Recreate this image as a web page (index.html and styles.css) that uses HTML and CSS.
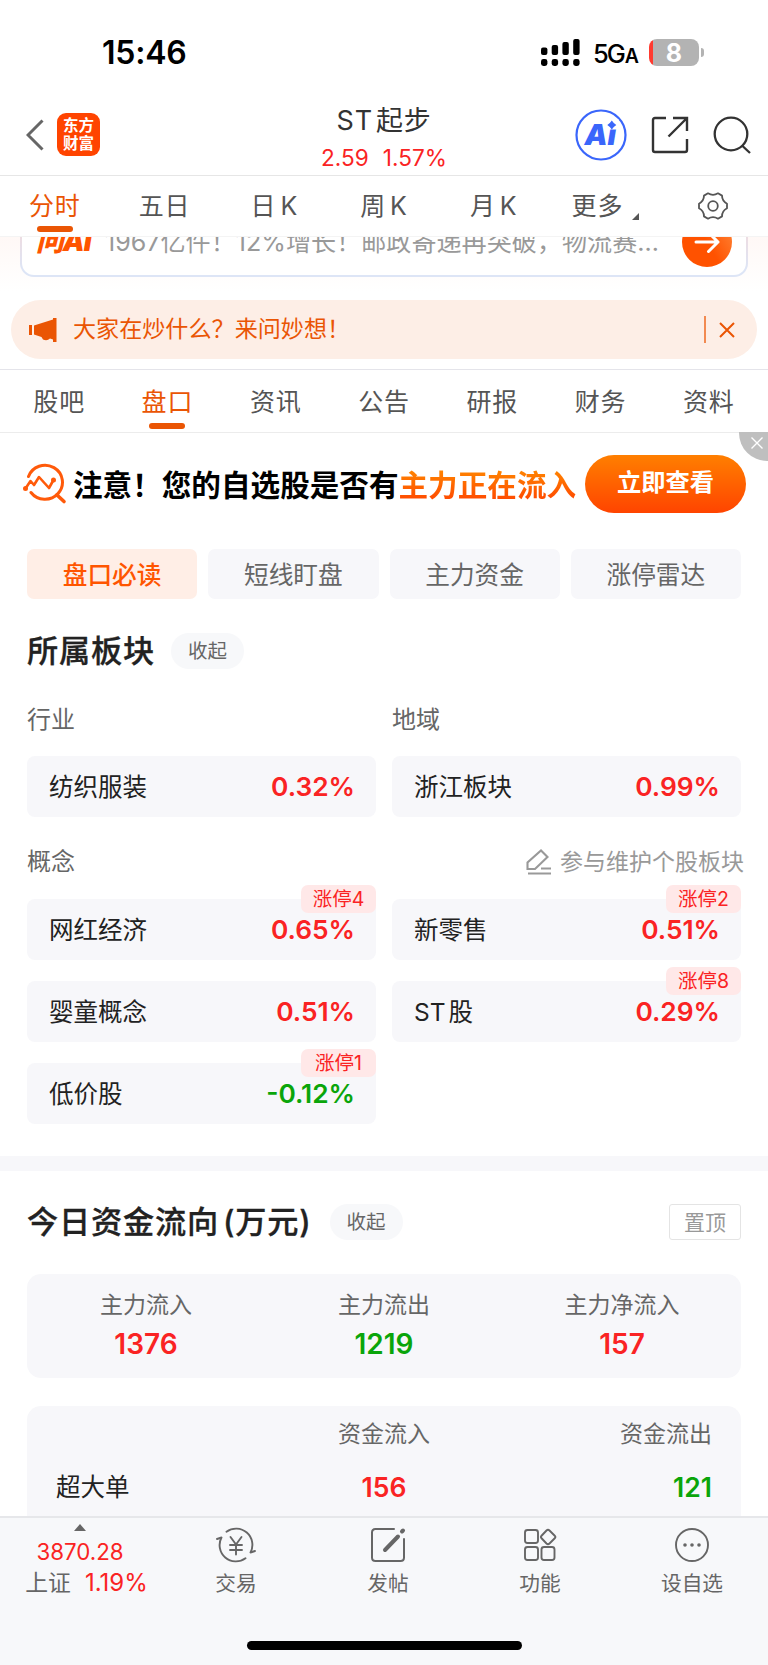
FILE: index.html
```html
<!DOCTYPE html>
<html lang="zh-CN">

<head>
    <meta charset="UTF-8">
    <meta name="viewport" content="width=device-width, initial-scale=1.0">
    <title>ST起步</title>
    <link rel="stylesheet" href="styles.css">
</head>

<body>
    <div class="status">
        <span class="time">15:46</span>
        <div class="status-right">
            <svg class="signal" width="39" height="27" viewBox="0 0 39 27">
                <rect x="0" y="8.5" width="6.4" height="7.5" rx="2" />
                <rect x="10.7" y="6" width="6.4" height="10" rx="2" />
                <rect x="21.4" y="3" width="6.4" height="13" rx="2" />
                <rect x="32.2" y="0" width="6.4" height="16" rx="2" />
                <rect x="0" y="20" width="6.4" height="7" rx="2.4" />
                <rect x="10.7" y="20" width="6.4" height="7" rx="2.4" />
                <rect x="21.4" y="20" width="6.4" height="7" rx="2.4" />
                <rect x="32.2" y="20" width="6.4" height="7" rx="2.4" />
            </svg>
            <span class="network">5G<small>A</small></span>
            <span class="battery">8</span>
            <span class="battery-cap"></span>
        </div>
    </div>

    <header class="header">
        <div class="header-left">
            <svg width="18" height="32" viewBox="0 0 18 32" fill="none" stroke="#666" stroke-width="3">
                <path d="M16.5 1.5L2 16L16.5 30.5" />
            </svg>
            <span class="logo">东方<br>财富</span>
        </div>
        <div class="stock">
            <div class="stock-name">ST<i></i>起步</div>
            <div class="stock-price"><span>2.59</span><span>1.57%</span></div>
        </div>
        <div class="header-right">
            <svg width="52" height="52" viewBox="0 0 52 52">
                <circle cx="26" cy="26" r="24.5" fill="#fff" stroke="#3a66fb" stroke-width="2.2" />
                <text class="ai-text" x="9.5" y="36">Ai</text>
                <rect x="31.5" y="10" width="12" height="10.5" fill="#fff" />
                <path d="M36.8 11.5L38.8 14L41.3 16L38.8 18L36.8 20.5L34.8 18L32.3 16L34.8 14Z" fill="#3a66fb" />
            </svg>
            <svg class="share" width="38" height="38" viewBox="0 0 38 38" fill="none" stroke="#333" stroke-width="2.4">
                <path d="M15 2H4Q2 2 2 4V34Q2 36 4 36H34Q36 36 36 34V23" />
                <path d="M22 2H36V15M36 2L17.5 20.5" />
            </svg>
            <svg width="38" height="38" viewBox="0 0 38 38" fill="none" stroke="#333" stroke-width="2.3">
                <circle cx="18" cy="18" r="16.3" />
                <path d="M29 29.5L37 37" />
            </svg>
        </div>
    </header>

    <nav class="period">
        <span class="active">分时</span>
        <span>五日</span>
        <span>日<i></i>K</span>
        <span>周<i></i>K</span>
        <span>月<i></i>K</span>
        <span class="more">更多<b class="corner"></b></span>
        <span>
            <svg width="30" height="28" viewBox="0 0 30 28" fill="none" stroke="#555" stroke-width="1.8" stroke-linejoin="round">
                <path d="M10 1.3Q15 4.5 20 1.3L24 3.6Q24 9 29 11.7V16.3Q24 19 24 24.4L20 26.7Q15 23.5 10 26.7L6 24.4Q6 19 1 16.3V11.7Q6 9 6 3.6Z" />
                <circle cx="15" cy="14" r="4.8" />
            </svg>
        </span>
    </nav>

    <div class="ask-wrap">
        <div class="ask">
            <span class="ask-logo">问AI</span>
            <span class="ask-text">1967亿件！12%增长！邮政寄递再突破，物流赛…</span>
            <span class="ask-go">
                <svg width="28" height="24" viewBox="0 0 28 24" fill="none" stroke="#fff" stroke-width="3" stroke-linecap="round" stroke-linejoin="round">
                    <path d="M3 12H25M15.5 2.5L25 12L15.5 21.5" />
                </svg>
            </span>
        </div>
    </div>

    <div class="notice">
        <svg width="28" height="24" viewBox="0 0 28 24" fill="#ea5504">
            <path d="M0 7H3V17H0ZM5 7.5L24 1.5V0H27.5V24H24V21.5L21 20.5Q18 23.5 14 21.5L12.5 19L5 16.5Z" />
        </svg>
        <span class="notice-text">大家在炒什么？来问妙想！</span>
        <i class="notice-line"></i>
        <svg width="16" height="16" viewBox="0 0 16 16" stroke="#ea5504" stroke-width="2">
            <path d="M1 1L15 15M15 1L1 15" />
        </svg>
    </div>

    <nav class="tabs">
        <span>股吧</span>
        <span class="active">盘口</span>
        <span>资讯</span>
        <span>公告</span>
        <span>研报</span>
        <span>财务</span>
        <span>资料</span>
    </nav>

    <div class="promo">
        <svg width="44" height="42" viewBox="0 0 44 42" fill="none" stroke="#ff5a0a" stroke-width="3" stroke-linecap="round" stroke-linejoin="round">
            <path d="M5.5 13.5A17.5 17 0 1 1 8 29.5" />
            <path d="M34 32L41 38.5" stroke-width="3.6" />
            <path d="M2.5 25.5L7.5 18L11 22L16 14L26 25L30.5 17" stroke-width="2.6" />
            <circle cx="2.5" cy="25.5" r="1" />
            <circle cx="30.5" cy="17" r="1" />
        </svg>
        <span class="promo-text">注意！您的自选股是否有<em>主力正在流入</em></span>
        <span class="promo-btn">立即查看</span>
        <span class="promo-close">
            <svg width="12" height="12" viewBox="0 0 12 12" stroke="#fff" stroke-width="1.4">
                <path d="M0.5 0.5L11.5 11.5M11.5 0.5L0.5 11.5" />
            </svg>
        </span>
    </div>

    <div class="pills">
        <span class="active">盘口必读</span>
        <span>短线盯盘</span>
        <span>主力资金</span>
        <span>涨停雷达</span>
    </div>

    <section class="sector">
        <div class="title">
            <h2>所属板块</h2>
            <span class="fold">收起</span>
        </div>
        <div class="grid labels">
            <span>行业</span>
            <span>地域</span>
        </div>
        <div class="grid">
            <div class="item">纺织服装<b>0.32%</b></div>
            <div class="item">浙江板块<b>0.99%</b></div>
        </div>
        <div class="concept">
            <span>概念</span>
            <span class="edit">
                <svg width="26" height="26" viewBox="0 0 26 26" fill="none" stroke="#999" stroke-width="2.1">
                    <path d="M1.5 20V13.5L15 1.5L21.5 8L9 20ZM15 19.5H25M2 24.5H25" />
                </svg>
                参与维护个股板块
            </span>
        </div>
        <div class="grid">
            <div class="item">网红经济<b>0.65%</b><small>涨停4</small></div>
            <div class="item">新零售<b>0.51%</b><small>涨停2</small></div>
            <div class="item">婴童概念<b>0.51%</b></div>
            <div class="item">ST<i></i>股<b>0.29%</b><small>涨停8</small></div>
            <div class="item">低价股<b class="down">-0.12%</b><small>涨停1</small></div>
        </div>
    </section>

    <section class="flow">
        <div class="title">
            <h2>今日资金流向<i></i>(万元)</h2>
            <span class="fold">收起</span>
            <span class="pin">置顶</span>
        </div>
        <div class="summary">
            <div>主力流入<b>1376</b></div>
            <div>主力流出<b class="down">1219</b></div>
            <div>主力净流入<b>157</b></div>
        </div>
        <div class="detail">
            <span></span>
            <span>资金流入</span>
            <span>资金流出</span>
            <span class="name">超大单</span>
            <b>156</b>
            <b class="down">121</b>
        </div>
    </section>

    <footer class="bottom">
        <div class="index">
            <i class="up"></i>
            <span class="red">3870.28</span>
            <span class="index-row">上证<em>1.19%</em></span>
        </div>
        <div class="nav-item">
            <svg width="40" height="36" viewBox="0 0 40 36" fill="none" stroke="#666" stroke-width="1.9" stroke-linecap="round" stroke-linejoin="round">
                <path d="M10.5 4.7A16.3 16.3 0 0 1 34.5 25.5L39 24" />
                <path d="M29.5 31.3A16.3 16.3 0 0 1 5.5 10.5L1 12" />
                <path d="M14.5 10L20 17.5L25.5 10M14 18H26M14 23H26M20 18V27.5" />
            </svg>
            <span>交易</span>
        </div>
        <div class="nav-item">
            <svg width="36" height="36" viewBox="0 0 36 36" fill="none" stroke="#666" stroke-width="2" stroke-linecap="round">
                <path d="M24 2H5.5Q2 2 2 5.5V30.5Q2 34 5.5 34H30.5Q34 34 34 30.5V12" />
                <path d="M28 9.5L15 23" stroke-width="4" />
                <path d="M32 4.5L33 3.5" stroke-width="4" />
            </svg>
            <span>发帖</span>
        </div>
        <div class="nav-item">
            <svg width="34" height="36" viewBox="0 0 34 36" fill="none" stroke="#666" stroke-width="1.9" stroke-linejoin="round">
                <rect x="2" y="3" width="13" height="13" rx="2.5" />
                <rect x="2" y="20" width="13" height="13" rx="2.5" />
                <rect x="18.5" y="20" width="13" height="13" rx="2.5" />
                <path d="M23.5 3.5Q25 2 26.5 3.5L32 9Q32.8 10 32 11L26.5 16.5Q25 18 23.5 16.5L18.3 11Q17.5 10 18.3 9Z" />
            </svg>
            <span>功能</span>
        </div>
        <div class="nav-item">
            <svg width="36" height="36" viewBox="0 0 36 36" fill="none" stroke="#666" stroke-width="1.9">
                <circle cx="18" cy="18" r="16" />
                <g fill="#666" stroke="none">
                    <circle cx="11" cy="18" r="1.8" />
                    <circle cx="18" cy="18" r="1.8" />
                    <circle cx="25" cy="18" r="1.8" />
                </g>
            </svg>
            <span>设自选</span>
        </div>
        <div class="home-bar"></div>
    </footer>
</body>

</html>
```
FILE: styles.css
```css
* {
    box-sizing: border-box;
}

body {
    margin: 0;
    width: 768px;
    height: 1665px;
    overflow: hidden;
    display: flex;
    flex-direction: column;
    background: #fff;
    color: #222;
    font-family: Inter, "Noto Sans CJK SC", sans-serif;
    font-size: 24px;
    line-height: 1;
    white-space: nowrap;
}

body > * {
    flex-shrink: 0;
}

svg {
    display: block;
    flex-shrink: 0;
}

i,
em {
    font-style: normal;
}

/* status bar */
.status {
    height: 90px;
    padding: 14px 64px 0 102px;
    display: flex;
    align-items: center;
    justify-content: space-between;
    color: #000;
}

.time {
    padding-top: 2px;
    font-size: 32px;
    font-weight: 600;
    letter-spacing: -0.2px;
}

.status-right {
    display: flex;
    align-items: center;
}

.network {
    width: 44px;
    margin: 3px 12px 0 13px;
    font-size: 25.5px;
    font-weight: 500;
    letter-spacing: -2px;
}

.network small {
    font-size: 19.5px;
    font-weight: 600;
    margin-left: 1px;
}

.battery {
    width: 50px;
    height: 27px;
    border-radius: 8px;
    background: linear-gradient(90deg, #ff3b30 4px, #b3b3b3 4px);
    color: #fff;
    font-size: 25px;
    font-weight: 700;
    line-height: 28px;
    text-align: center;
}

.battery-cap {
    width: 3px;
    height: 9px;
    margin-left: 2px;
    border-radius: 0 4px 4px 0;
    background: #b3b3b3;
}

/* header */
.header {
    height: 86px;
    padding: 0 17px 0 26px;
    display: grid;
    grid-template-columns: 1fr 200px 1fr;
    border-bottom: 1px solid #e6e6e6;
}

.header-left {
    display: flex;
    align-items: center;
    gap: 13px;
    padding-top: 4px;
}

.logo {
    width: 43px;
    height: 43px;
    padding-top: 4px;
    border-radius: 9px;
    background: #ff4400;
    color: #fff;
    font-size: 15.5px;
    font-weight: 700;
    line-height: 17.5px;
    text-align: center;
}

.stock {
    padding-top: 15px;
    text-align: center;
    margin-left: -9px;
}

.stock-name {
    font-size: 27px;
    line-height: 32px;
    letter-spacing: 0.8px;
    color: #333;
}

.stock-name i {
    margin-left: 3px;
}

.stock-price {
    display: flex;
    justify-content: center;
    gap: 14px;
    margin-top: 7px;
    font-size: 22.6px;
    line-height: 28px;
    color: #fa2323;
}

.header-right {
    display: flex;
    align-items: center;
    justify-content: flex-end;
    padding-top: 4px;
}

.ai-text {
    font-size: 29px;
    font-weight: 900;
    font-style: italic;
    fill: #3a66fb;
}

.share {
    margin: 0 24px;
}

/* chart period */
.period {
    position: relative;
    height: 61px;
    display: grid;
    grid-template-columns: repeat(7, 1fr);
    background: #fff;
    border-bottom: 1px solid #f4f4f4;
}

.period span,
.tabs span {
    position: relative;
    display: flex;
    align-items: center;
    justify-content: center;
    font-size: 25px;
    letter-spacing: 0.8px;
    color: #555;
}

.period .more {
    padding-left: 4px;
}

.period i {
    margin-left: 4px;
}

.period .active,
.tabs .active {
    color: #ea5504;
}

.active::after {
    position: absolute;
    left: calc(50% - 18px);
    bottom: 4px;
    width: 36px;
    height: 6px;
    border-radius: 3px;
    background: #ea5504;
}

.period .active::after,
.tabs .active::after {
    content: "";
}

.corner {
    margin: 20px 0 0 9px;
    border-left: 7px solid transparent;
    border-bottom: 7px solid #555;
}

/* ask bar, scrolled half under the period tabs */
.ask-wrap {
    height: 63px;
    padding: 0 20px;
    overflow: hidden;
    background: linear-gradient(#fff8f6, #fff 54px);
}

.ask {
    height: 71px;
    margin-top: -31px;
    padding: 0 14px;
    display: flex;
    align-items: center;
    border: 2px solid transparent;
    border-radius: 14px;
    background: linear-gradient(#fff, #fff) padding-box, linear-gradient(#fbd5d0, #dde5f6 90%) border-box;
}

.ask-logo {
    width: 69px;
    font-size: 27.5px;
    font-weight: 900;
    font-style: italic;
    letter-spacing: -0.8px;
    color: #ff5500;
}

.ask-text {
    flex: 1;
    padding-top: 2px;
    font-size: 25.1px;
    color: #999;
}

.ask-go {
    width: 50px;
    height: 50px;
    display: flex;
    align-items: center;
    justify-content: center;
    border-radius: 50%;
    background: linear-gradient(60deg, #ff5200 50%, #ff8a3c);
}

/* notice */
.notice {
    height: 59px;
    margin: 0 11px;
    padding: 0 22px 0 18px;
    display: flex;
    align-items: center;
    border-radius: 30px;
    background: #fdeee6;
}

.notice-text {
    flex: 1;
    margin: 1px 0 0 16px;
    font-size: 23.1px;
    color: #ea5504;
}

.notice-line {
    width: 2px;
    height: 27px;
    margin-right: 13px;
    background: #f28a51;
}

/* tabs */
.tabs {
    height: 64px;
    margin-top: 10px;
    padding: 0 5px;
    display: grid;
    grid-template-columns: repeat(7, 1fr);
    border-top: 1px solid #e4e4ea;
    border-bottom: 1px solid #ececec;
}

.tabs span {
    padding-top: 2px;
}

.tabs .active::after {
    bottom: 3px;
}

/* promo */
.promo {
    position: relative;
    height: 105px;
    padding: 0 22px 4px 23px;
    display: flex;
    align-items: center;
}

.promo-text {
    flex: 1;
    margin: 2px 0 0 6px;
    font-size: 29.6px;
    line-height: 36px;
    font-weight: 700;
    color: #000;
}

.promo-text em {
    background: linear-gradient(#ff8a00, #ff4400);
    -webkit-background-clip: text;
    background-clip: text;
    color: transparent;
}

.promo-btn {
    width: 161px;
    height: 58px;
    border-radius: 29px;
    background: linear-gradient(#ff7f00, #ff4400);
    color: #fff;
    font-size: 24.3px;
    font-weight: 700;
    line-height: 55px;
    text-align: center;
}

.promo-close {
    position: absolute;
    top: -1px;
    right: 0;
    width: 29px;
    height: 29px;
    padding: 5px 0 0 12px;
    border-radius: 0 0 0 28px;
    background: #bfbfbf;
}

/* pills */
.pills {
    display: grid;
    grid-template-columns: repeat(4, 1fr);
    gap: 11px;
    margin: 11px 27px 0;
}

.pills span {
    height: 50px;
    border-radius: 7px;
    background: #f7f7fa;
    color: #666;
    font-size: 24.7px;
    line-height: 52px;
    text-align: center;
}

.pills .active {
    background: #ffeee6;
    color: #ff5500;
    font-weight: 500;
}

/* sector */
.sector {
    height: 572px;
    padding: 34px 27px 0;
    border-bottom: 15px solid #f7f7fa;
}

.title {
    height: 36px;
    display: flex;
    align-items: center;
}

h2 {
    margin: 0;
    padding-top: 2px;
    font-size: 31.2px;
    font-weight: 500;
    letter-spacing: 0.8px;
    -webkit-text-stroke: 0.3px #222;
}

h2 i {
    margin-left: 4px;
}

.fold {
    width: 73px;
    height: 36px;
    margin-left: 16px;
    border-radius: 18px;
    background: #f7f8fa;
    color: #666;
    font-size: 19.5px;
    line-height: 37px;
    text-align: center;
}

.grid {
    display: grid;
    grid-template-columns: 1fr 1fr;
    gap: 21px 16px;
}

.labels,
.concept {
    color: #666;
    font-size: 24px;
    line-height: 30px;
}

.labels {
    padding: 36px 0 21px;
}

.item {
    position: relative;
    height: 61px;
    padding: 2px 21px 0 22px;
    display: flex;
    align-items: center;
    border-radius: 8px;
    background: #f7f7fa;
    font-size: 24.5px;
}

.item i {
    margin-left: 3px;
}

b {
    color: #fa2323;
    font-weight: 600;
}

.item b {
    margin-left: auto;
    font-size: 26.3px;
}

.down,
.item .down {
    color: #0aa50a;
}

.item small {
    position: absolute;
    top: -14px;
    right: 0;
    width: 75px;
    height: 28px;
    border-radius: 7px;
    background: #ffe8e8;
    color: #fa2323;
    font-size: 19.5px;
    line-height: 29px;
    text-align: center;
}

.concept {
    display: flex;
    justify-content: space-between;
    margin-right: -3px;
    padding: 30px 0 22px;
}

.edit {
    display: flex;
    align-items: center;
    gap: 8px;
    color: #999;
    font-size: 23px;
}

/* money flow */
.flow {
    height: 345px;
    padding: 33px 27px 0;
    overflow: hidden;
}

.flow .fold {
    margin-left: 18px;
}

.pin {
    width: 72px;
    height: 36px;
    margin-left: auto;
    border: 1px solid #e4e4e4;
    border-radius: 3px;
    color: #999;
    font-size: 21px;
    line-height: 35px;
    text-align: center;
}

.summary {
    height: 104px;
    margin-top: 34px;
    padding-bottom: 4px;
    display: grid;
    grid-template-columns: repeat(3, 1fr);
    align-items: center;
    border-radius: 14px;
    background: #f7f7fa;
    color: #666;
    font-size: 23px;
    line-height: 30px;
    text-align: center;
}

.summary b {
    display: block;
    margin-top: 9px;
    font-size: 28px;
}

.detail {
    height: 130px;
    margin-top: 28px;
    padding: 13px 29px 0;
    display: grid;
    grid-template-columns: repeat(3, 1fr);
    grid-template-rows: 30px 76px;
    align-items: center;
    border-radius: 14px;
    background: #f7f7fa;
    color: #666;
    font-size: 23px;
}

.detail > :nth-child(3n) {
    text-align: right;
}

.detail > :nth-child(3n + 2) {
    text-align: center;
}

.detail b {
    font-size: 26.5px;
}

.name {
    color: #222;
    font-size: 24.5px;
}

/* bottom bar */
.bottom {
    height: 149px;
    display: grid;
    grid-template-columns: 160px repeat(4, 152px);
    grid-template-rows: 122px 12px;
    border-top: 2px solid #e6e7ea;
    background: #f7f8fa;
    color: #666;
}

.index {
    display: flex;
    flex-direction: column;
    align-items: center;
    padding-top: 6px;
    font-size: 22.3px;
    color: #666;
}

.up {
    border: 6px solid transparent;
    border-top: 0;
    border-bottom: 7px solid #666;
}

.red,
.index em {
    color: #fa2323;
}

.red {
    margin-top: 10px;
}

.index-row {
    margin-top: 8px;
    padding-left: 13px;
    font-size: 22.8px;
}

.index em {
    margin-left: 14px;
    font-size: 24px;
}

.nav-item {
    display: flex;
    flex-direction: column;
    align-items: center;
    padding-top: 9px;
    font-size: 20.7px;
}

.nav-item span {
    margin-top: 11px;
}

.home-bar {
    grid-column: 1 / -1;
    justify-self: center;
    width: 275px;
    height: 9px;
    margin-top: 1px;
    border-radius: 5px;
    background: #000;
}
```
